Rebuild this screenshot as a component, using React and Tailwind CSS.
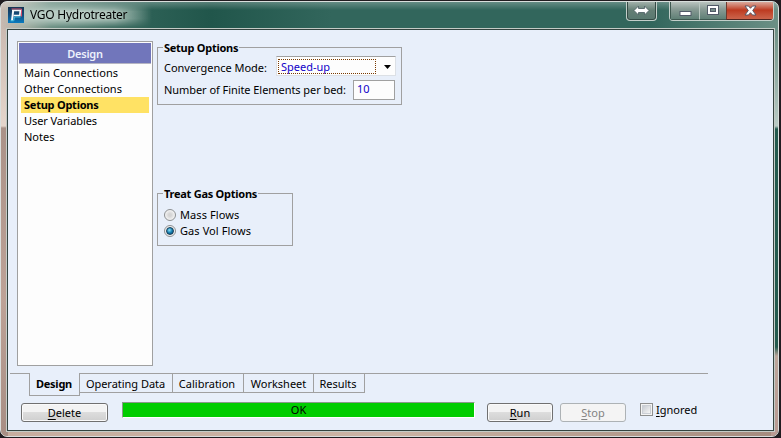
import React from 'react';

const navItems = [
  { label: 'Main Connections', cls: 'tracking-[0.08px]' },
  { label: 'Other Connections', cls: 'tracking-[0.05px]' },
  { label: 'Setup Options', cls: 'bg-[#ffe264] font-bold tracking-[-0.24px]' },
  { label: 'User Variables', cls: 'tracking-[-0.08px]' },
  { label: 'Notes', cls: '' },
];

const tabs = [
  { label: 'Operating Data', cls: 'w-[93px] pr-px tracking-[-0.03px]' },
  { label: 'Calibration', cls: 'w-[71px] pr-[2px]' },
  { label: 'Worksheet', cls: 'w-[70px]' },
  { label: 'Results', cls: 'w-[51px] pr-[2px]' },
];

function AppIcon() {
  return (
    <svg width="16" height="16" viewBox="0 0 16 16" className="relative z-10 block shrink-0">
      <defs>
        <linearGradient id="logo" x1="0" y1="0" x2="0" y2="1">
          <stop offset="0" stopColor="#173453" />
          <stop offset="0.5" stopColor="#124e7e" />
          <stop offset="1" stopColor="#087bc0" />
        </linearGradient>
      </defs>
      <rect width="16" height="16" fill="url(#logo)" />
      <path d="M3.5 2H13.5V9.5" fill="none" stroke="#d64a69" strokeWidth="1" />
      <path d="M4 3.5H12.3L11.8 8.5H5.5" fill="none" stroke="#f4f8fb" strokeWidth="1.7" />
      <path d="M5.2 3.5L4 13.5" fill="none" stroke="#f4f8fb" strokeWidth="2" />
      <path d="M2.5 13.8H5.8L6.5 10H12.5" fill="none" stroke="#47c6e8" strokeWidth="0.9" />
    </svg>
  );
}

function TitleBar() {
  return (
    <div className="flex h-[28px] items-start pl-[7px]">
      <div className="flex h-[28px] flex-1 items-center">
        <AppIcon />
        <div className="-ml-[22px] flex h-[24px] w-[150px] items-center bg-[linear-gradient(90deg,transparent,#b4c7bf_16%,#bccfc7_50%,#a9c0b7_75%,transparent)] mask-[linear-gradient(180deg,transparent,black_35%,black_65%,transparent)] pl-[28px] text-[12px] tracking-[-0.25px] whitespace-nowrap text-black">
          VGO Hydrotreater
        </div>
      </div>
      <div className="flex h-[20px] w-[31px] items-center justify-center rounded-b-[4px] border border-t-0 border-[#c3cfca] bg-linear-to-b from-[#a9b7b1] via-[#637e74] via-50% to-[#597970] shadow-[inset_0_0_0_1px_#344b45]">
        <svg width="17" height="11" viewBox="0 0 17 11">
          <path d="M1 5.5L5.5 1V3.5H11.5V1L16 5.5L11.5 10V7.5H5.5V10Z" fill="white" stroke="#53656a" strokeWidth="0.9" />
        </svg>
      </div>
      <div className="mr-[4px] ml-[12px] flex h-[20px] w-[105px] overflow-hidden rounded-b-[4px] border border-t-0 border-[#c3cfca]">
        <div className="flex w-[29px] items-center justify-center border-b border-l border-[#3e5850] bg-linear-to-b from-[#c0c9c5] via-[#899b95] via-45% to-[#5f8076]">
          <svg width="13" height="15" viewBox="0 0 13 15">
            <rect x="1" y="8.5" width="11" height="4" fill="white" stroke="#515a68" />
          </svg>
        </div>
        <div className="flex w-[27px] items-center justify-center border-b border-l border-b-[#3e5850] border-l-[#b9c7c1] bg-linear-to-b from-[#c0c9c5] via-[#899b95] via-45% to-[#5f8076]">
          <svg width="12" height="10" viewBox="0 0 12 10">
            <rect x="0.5" y="0.5" width="11" height="9" fill="white" stroke="#515a68" />
            <rect x="3.5" y="3.5" width="5" height="3" fill="#788f89" stroke="#515a68" />
          </svg>
        </div>
        <div className="flex w-[47px] items-center justify-center border-b border-l border-b-[#51251f] border-l-[#6f392e] bg-linear-to-b from-[#d9aa9e] from-5% via-[#bd3a20] via-50% to-[#cb644b]">
          <svg width="13" height="11" viewBox="0 0 13 11">
            <path d="M1 1H4.5L6.5 3.3L8.5 1H12L8.7 5.5L12 10H8.5L6.5 7.7L4.5 10H1L4.3 5.5Z" fill="white" stroke="#575766" />
          </svg>
        </div>
      </div>
    </div>
  );
}

function Sidebar() {
  return (
    <div className="h-[325px] w-[136px] shrink-0 border border-[#a0a0a0] bg-[#fdfdfd] p-px">
      <div className="flex h-[21px] items-center justify-center border-b border-[#b5b5c3] bg-[#7176bb] pt-[2px] text-[11px] font-semibold tracking-[-0.2px] text-[#edf1fb]">Design</div>
      <div className="px-[2px] pt-[1px]">
        {navItems.map((n) => (
          <div key={n.label} className={'h-[16px] pl-[3px] leading-[16px] whitespace-nowrap ' + n.cls}>{n.label}</div>
        ))}
      </div>
    </div>
  );
}

function GroupBox({ title, className, children }) {
  return (
    <div className={'border border-[#a0a0a0] ' + className}>
      <div className="-mt-[9px] ml-[5px] h-[17px] w-fit bg-[#e8effa] px-px leading-[18px] font-bold tracking-[-0.26px] whitespace-nowrap">{title}</div>
      {children}
    </div>
  );
}

function Radio({ label, checked }) {
  return (
    <div className="flex h-[16px] items-center pl-[6px]">
      <span className="flex size-[12px] items-center justify-center rounded-full border border-[#8c8f91] bg-[radial-gradient(circle,#d5d5d5_20%,#f7f7f7_75%)]">
        {checked && <span className="size-[8px] rounded-full border border-[#163e5b] bg-[radial-gradient(circle_at_40%_35%,#8fe3fa,#157fb1_50%,#0b3f63)]" />}
      </span>
      <span className="ml-[4px] tracking-[0.08px]">{label}</span>
    </div>
  );
}

function Button({ first, rest, className }) {
  return (
    <div className={'flex h-[19px] items-center justify-center rounded-[3px] border pt-[2px] ' + className}>
      <span className="underline underline-offset-2">{first}</span>{rest}
    </div>
  );
}

const enabled = 'border-[#707070] bg-linear-to-b from-[#f3f3f3] from-50% via-[#dddddd] via-50% to-[#cfcfcf] shadow-[inset_0_0_0_1px_#fafafa]';

export default function App() {
  return (
    <div className="h-[438px] w-[781px] overflow-hidden bg-[#211c20] font-['Noto_Sans',sans-serif] text-[11px] text-black">
      <div className="h-[436px] w-[779px] translate-y-px overflow-hidden rounded-[7px] border border-[#d9dedc] bg-[linear-gradient(180deg,#ffffff40_0px,transparent_8px),linear-gradient(90deg,#c9b9b0_0px,#a5b0a5_24px,#6f9286_50px,#2c6055_150px,#21564b_210px,#32665c_330px,#32665c_650px,#6d9086_779px)]">
        <div className="-mt-px">
          <TitleBar />
        </div>
        <div className="h-[407px] bg-[linear-gradient(180deg,#cbbab1_0px,#e5d6cc_97px,#aa9288_99px,#bda297_270px,#a78e84_407px),linear-gradient(180deg,#6d9086_0px,#b9cbc5_97px,#235a4e_100px,#235a4e_318px,#bba59a_327px,#b99a92_407px),linear-gradient(90deg,#c7ad9f,#cbb3a4_50%,#a58b7e)] pr-[5px] pl-[6px] [background-position:0_0,right_0,0_0] [background-repeat:no-repeat] [background-size:7px_100%,7px_100%,100%_100%]">
          <div className="h-[402px] w-[767px] border border-[#34433f] bg-[#e8effa] shadow-[0_0_0_1px_#c4cbc6]">
            <div className="flex h-[343px] items-start pt-[11px] pl-[9px]">
              <Sidebar />
              <div className="ml-[4px] pt-[6px]">
                <GroupBox title="Setup Options" className="h-[58px] w-[245px]">
                  <div className="flex h-[20px] items-center pl-[6px]">
                    <span className="w-[112px] pt-[5px] tracking-[-0.02px] whitespace-nowrap">Convergence Mode:</span>
                    <div className="flex h-[20px] w-[120px] items-center border border-t-[#a0a0a0] border-r-[#dce0e5] border-b-[#dce0e5] border-l-[#dce0e5] bg-[#fdfdfd] pl-px">
                      <div className="flex h-[15px] w-[98px] items-center border border-dotted border-[#7a3900] pl-[2px] leading-[13px] text-[#1000c8]">Speed-up</div>
                      <svg width="7" height="4" viewBox="0 0 7 4" className="mt-px ml-[8px]"><path d="M0 0H7L3.5 4Z" /></svg>
                    </div>
                  </div>
                  <div className="mt-[4px] flex h-[20px] items-center pl-[6px]">
                    <span className="w-[189px] tracking-[-0.06px] whitespace-nowrap">Number of Finite Elements per bed:</span>
                    <div className="h-[20px] w-[42px] border border-[#a0a0a0] bg-[#fdfdfd] pl-[3px] leading-[16px] text-[#1000c8]">10</div>
                  </div>
                </GroupBox>
                <GroupBox title="Treat Gas Options" className="mt-[88px] h-[53px] w-[136px]">
                  <div className="pt-[5px]">
                    <Radio label="Mass Flows" />
                    <Radio label="Gas Vol Flows" checked />
                  </div>
                </GroupBox>
              </div>
            </div>
            <div className="flex h-[23px] w-[700px] items-start pl-[2px]">
              <div className="h-px w-[19px] bg-[#a0a0a0]" />
              <div className="flex h-[23px] w-[51px] items-center justify-center border border-t-0 border-[#a0a0a0] pr-px font-bold tracking-[-0.25px]">Design</div>
              {tabs.map((t) => (
                <div key={t.label} className={'flex h-[20px] items-center justify-center border border-l-0 border-[#a0a0a0] pt-[3px] whitespace-nowrap ' + t.cls}>{t.label}</div>
              ))}
              <div className="h-px flex-1 bg-[#a0a0a0]" />
            </div>
            <div className="flex items-start pt-[6px] pl-[13px]">
              <Button first="D" rest="elete" className={'mt-px w-[87px] ' + enabled} />
              <div className="ml-[14px] flex h-[16px] w-[353px] items-center justify-center border border-t-[#8a9a8a] border-r-white border-b-white border-l-[#8a9a8a] bg-[#00cd00]">OK</div>
              <Button first="R" rest="un" className={'mt-px ml-[12px] w-[66px] ' + enabled} />
              <Button first="S" rest="top" className="mt-px ml-[7px] w-[66px] border-[#adb2b5] bg-[#f4f4f4] text-[#838383]" />
              <div className="mt-px ml-[14px] size-[13px] border border-[#8e8f8f] bg-[#f4f4f4] p-px"><div className="size-full border border-[#cbcfd5] bg-linear-to-br from-[#c8ccd2] to-[#f6f6f6]" /></div>
              <div className="ml-[3px] leading-[16px]"><span className="underline underline-offset-2">I</span>gnored</div>
            </div>
          </div>
        </div>
      </div>
    </div>
  );
}
